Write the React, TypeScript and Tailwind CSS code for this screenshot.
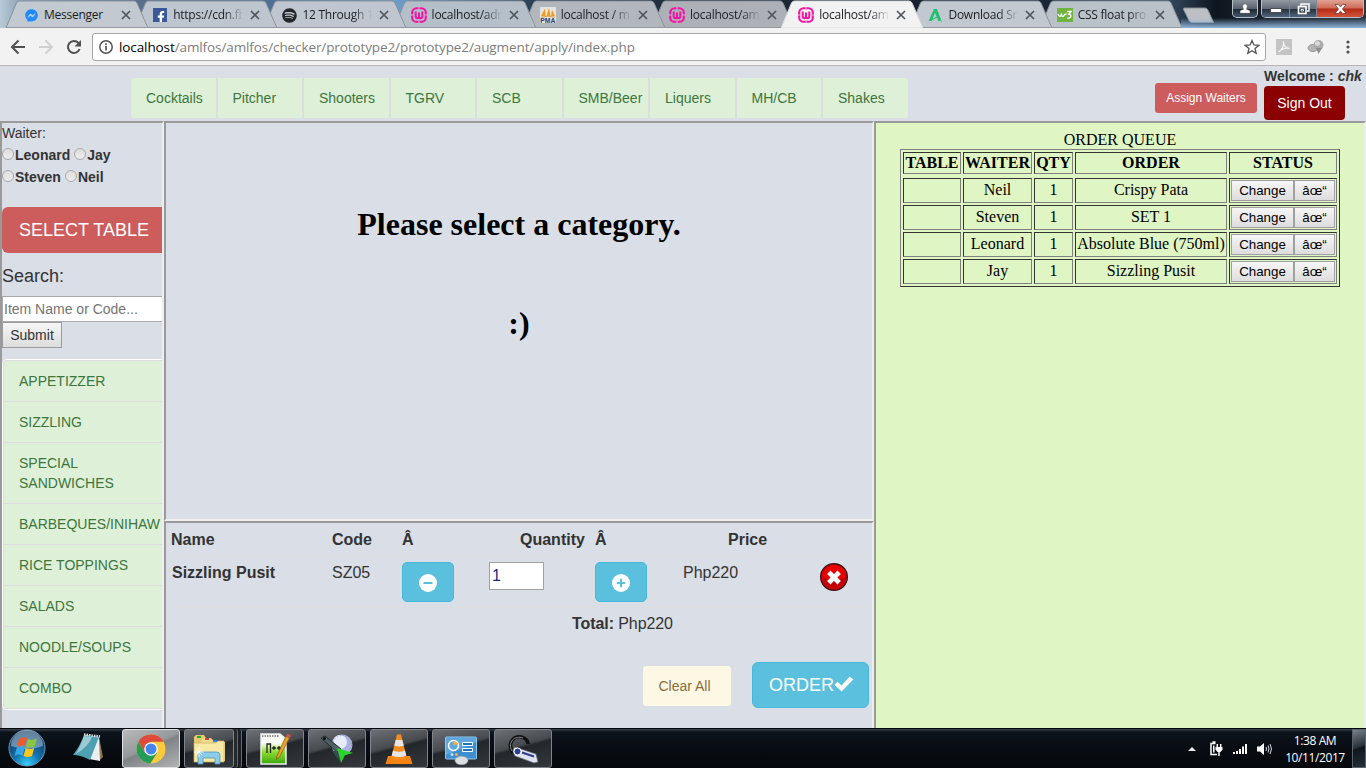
import React from "react";
import { FaFacebookF, FaFacebookMessenger, FaSpotify } from "react-icons/fa";

const UI = "font-['Open_Sans','Noto_Sans',sans-serif]";
const ARIAL = "font-['Liberation_Sans',Arial,sans-serif]";
const TIMES = "font-['Liberation_Serif','Times_New_Roman',serif]";
const INSET = "border-2 border-t-[#9a9a9a] border-l-[#9a9a9a] border-r-[#eeeeee] border-b-[#eeeeee]";

function MessengerIcon() {
  return <FaFacebookMessenger size={13} color="#1e8cff" />;
}
function FacebookIcon() {
  return (
    <div className="flex h-[14px] w-[14px] items-end justify-end overflow-hidden bg-[#3b5998]">
      <FaFacebookF size={12} color="#fff" className="-mb-px" />
    </div>
  );
}
function WampIcon() {
  return (
    <svg width="16" height="16" viewBox="0 0 16 16" fill="none">
      <rect x="1.200" y="1.200" width="13.600" height="13.600" rx="4.400" stroke="#f413a4" strokeWidth="2.100" />
      <path d="M0 8h2.500M13.500 8H16M8 0v2.400M8 13.600V16" stroke="#e6b4d2" strokeWidth="1" />
      <path d="M4.700 4.500v4.500c0 3 3.300 3 3.300 0V5.400M8 9c0 3 3.300 3 3.300 0V4.500" stroke="#f413a4" strokeWidth="2" />
    </svg>
  );
}
function PmaIcon() {
  return (
    <svg width="16" height="16" viewBox="0 0 16 16">
      <rect width="16" height="16" fill="#e4e4e4" />
      <path d="M5 1.500L5.500 9H1zM9 .8L10.500 9H6.500zM12 3l3 6h-4z" fill="#f39a1b" />
      <path d="M1 10.200q7-2 14 0" stroke="#e0a040" fill="none" />
      <text x="0.300" y="15.800" fontSize="6.800" fontWeight="700" fontFamily="Liberation Sans" fill="#33386b">PMA</text>
    </svg>
  );
}
function ApkIcon() {
  return (
    <svg width="15" height="15" viewBox="0 0 15 15">
      <path d="M6 1h3l4.500 12h-3.200L9 9.500 3 13H.6z" fill="#1fbf74" />
      <path d="M7 5l1.500 3.400L4.500 11z" fill="#c6ccd2" />
      <path d="M12.300 11.500l2 2-1.200 1z" fill="#64d8a0" />
    </svg>
  );
}
function W3Icon() {
  return (
    <svg width="16" height="14" viewBox="0 0 16 14">
      <rect width="16" height="14" fill="#6eb43f" />
      <path d="M1 6c1.200 3 2.600 3 3.300.6C5.200 9.400 6.600 9 7.500 6.500L9.500 6M10 3.500h4L11.900 6.200c3.300.2 2.500 4.800-1.700 3.700" stroke="#fff" strokeWidth="1.400" fill="none" />
    </svg>
  );
}

type Tab = { title: string; icon: React.ReactNode; z: string; active?: boolean; fill: string };
const tabs: Tab[] = [
  { title: "Messenger", icon: <MessengerIcon />, z: "z-[9]", fill: "#c3c9d0" },
  { title: "https://cdn.fb", icon: <FacebookIcon />, z: "z-[8]", fill: "#bdc5ce" },
  { title: "12 Through 1", icon: <FaSpotify size={15} color="#23262b" />, z: "z-[7]", fill: "#bfc6cf" },
  { title: "localhost/adr", icon: <WampIcon />, z: "z-[6]", fill: "#b5bfca" },
  { title: "localhost / m", icon: <PmaIcon />, z: "z-[5]", fill: "#b2b7be" },
  { title: "localhost/am", icon: <WampIcon />, z: "z-[4]", fill: "#adb1b7" },
  { title: "localhost/am", icon: <WampIcon />, z: "z-[10]", active: true, fill: "#f2f2f2" },
  { title: "Download Sr", icon: <ApkIcon />, z: "z-[3]", fill: "#c1c8cf" },
  { title: "CSS float pro", icon: <W3Icon />, z: "z-[2]", fill: "#b9c1c9" },
];

function TabStrip() {
  return (
    <div className="relative flex h-[28px] shrink-0 overflow-hidden bg-[linear-gradient(90deg,#b9cbd6_0px,#8aa3bb_20px,#58708c_140px,#4f6f94_270px,#6d9cc8_400px,#2c4258_530px,#22303f_650px,#1c2836_780px,#17222f_920px,#1a2836_1050px,#33475b_1170px,#0e1620_1215px,#2a3644_1366px)] pl-[6px]">
      {tabs.map((t, i) => (
        <div key={i} className={`relative -mr-[12.800px] h-[28px] w-[142px] shrink-0 ${t.z}`}>
          <svg className="absolute inset-0" width="142" height="28" viewBox="0 0 142 28">
            <path d="M0 28L10.500 3Q11.500 1 13.500 1H128Q130 1 131 3L142 28z" fill={t.fill} stroke={t.active ? "#d6d9dc" : "#8b939d"} strokeWidth="1" />
            {!t.active && <path d="M0 27.500H142" stroke="#9299a2" />}
          </svg>
          <div className="relative flex h-full items-center pt-[2px] pl-[17px]">
            <div className="flex w-[16px] justify-center">{t.icon}</div>
            <div className={`ml-[5px] w-[72px] text-[12px] tracking-[-0.250px] whitespace-nowrap text-[#1b1d21] ${i ? "[mask-image:linear-gradient(90deg,#000_70%,transparent_98%)]" : ""} ${UI}`}>{t.title}</div>
            <svg className="ml-[5px]" width="10" height="10" viewBox="0 0 10 10">
              <path d="M1 1l8 8M9 1L1 9" stroke="#50555b" strokeWidth="1.700" />
            </svg>
          </div>
        </div>
      ))}
      <svg className="mt-[7px] ml-[13px] shrink-0" width="34" height="17" viewBox="0 0 34 17">
        <path d="M2 1H23Q25 1 26 3L31.500 15.500H10Q8 15.500 7 13.500L1.500 2.500Q1 1 2 1z" fill="#bcc0c5" stroke="#858b93" />
      </svg>
      <div className="absolute right-0 bottom-0 h-[10px] w-[185px] bg-[linear-gradient(180deg,transparent,#8fb4da)]" />
      <div className="absolute top-0 right-[2px] flex h-[19px] gap-[3px]">
        <div className="flex h-[18px] w-[26px] items-center justify-center rounded-b-[5px] border border-t-0 border-[#b5bfc9] bg-[linear-gradient(180deg,#8a929c_0%,#59626e_50%,#1d2732_52%,#44566a_100%)]">
          <svg width="12" height="11" viewBox="0 0 12 11"><path d="M3.600 3.500a2.400 2.700 0 1 1 4.800 0Q8.400 5.200 7.400 6.200L11 7.500V10.300H1V7.500L4.600 6.200Q3.600 5.200 3.600 3.500z" fill="#fff" stroke="#333" strokeWidth=".5" /></svg>
        </div>
        <div className="flex h-[18px] w-[103px] overflow-hidden rounded-b-[5px] border border-t-0 border-[#b5bfc9]">
          <div className="flex w-[28px] items-center justify-center border-r border-[#7c8894] bg-[linear-gradient(180deg,#929aa4_0%,#636c78_50%,#232e3a_52%,#50657c_100%)] pt-[4px]">
            <div className="h-[5px] w-[12px] border border-[#4a4f57] bg-white" />
          </div>
          <div className="flex w-[27px] items-center justify-center border-r border-[#7c8894] bg-[linear-gradient(180deg,#929aa4_0%,#636c78_50%,#232e3a_52%,#50657c_100%)]">
            <svg width="13" height="12" viewBox="0 0 13 12" fill="none" stroke="#fff"><path d="M4 3V1h8v7h-2" strokeWidth="1.400" /><rect x="1.500" y="3.500" width="7.500" height="7" strokeWidth="1.600" /><path d="M4 6.500h2.500v1.500H4z" strokeWidth=".8" /></svg>
          </div>
          <div className="flex flex-1 items-center justify-center bg-[linear-gradient(180deg,#e0a294_0%,#cf6a56_48%,#b22b15_52%,#d4533b_100%)]">
            <svg width="13" height="10" viewBox="0 0 13 10"><path d="M1 .5h3.500L6.500 3 8.500.5H12L8.500 5l3.500 4.500H8.500L6.500 7l-2 2.500H1L4.500 5z" fill="#fff" stroke="#5c2a2a" strokeWidth=".7" /></svg>
          </div>
        </div>
      </div>
    </div>
  );
}

function Toolbar() {
  return (
    <div className="flex h-[38px] shrink-0 items-center border-b border-[#b6b4b6] bg-[#f2f2f2] pl-[10px]">
      <svg width="16" height="16" viewBox="0 0 16 16" fill="none" stroke="#505050" strokeWidth="2"><path d="M15 8H2M8.500 1.500L2 8l6.500 6.500" /></svg>
      <svg className="ml-[12px]" width="16" height="16" viewBox="0 0 16 16" fill="none" stroke="#d0d0d0" strokeWidth="2"><path d="M1 8h13M7.500 1.500L14 8l-6.500 6.500" /></svg>
      <svg className="ml-[12px]" width="16" height="16" viewBox="0 0 16 16" fill="none" stroke="#505050" strokeWidth="2"><path d="M13.600 10A6 6 0 1 1 12.500 4" /><path d="M15 1v6.500H8.500z" fill="#505050" stroke="none" /></svg>
      <div className="ml-[10px] flex h-[28px] w-[1174px] items-center rounded-[3px] border border-[#a5a5a5] bg-white pl-[6px]">
        <svg width="14" height="14" viewBox="0 0 14 14" fill="none" stroke="#555"><circle cx="7" cy="7" r="6.200" strokeWidth="1.500" /><path d="M7 6v4.500M7 3.200v1.700" strokeWidth="1.700" /></svg>
        <div className={`ml-[6px] flex-1 pt-px text-[13.500px] tracking-[-0.100px] whitespace-nowrap text-[#7d7d7d] ${UI}`}><span className="text-black">localhost</span>/amlfos/amlfos/checker/prototype2/prototype2/augment/apply/index.php</div>
        <svg className="mr-[5px]" width="16" height="16" viewBox="0 0 16 16"><path d="M8 1.500l1.900 4.500 4.800.4-3.700 3.200 1.200 4.800L8 11.800l-4.200 2.600L5 9.600 1.300 6.400 6.100 6z" fill="none" stroke="#555" strokeWidth="1.300" /></svg>
      </div>
      <svg className="ml-[10px]" width="16" height="16" viewBox="0 0 16 16"><rect width="16" height="16" fill="#c4c4c4" /><path d="M2.500 13C5.500 11.500 8.500 7 7.300 2.500c.2 4 3 6.500 6.200 7-4-.8-7.500.3-11 3.500z" fill="none" stroke="#f5f5f5" strokeWidth="1.200" /></svg>
      <svg className="ml-[15px]" width="18" height="16" viewBox="0 0 18 16"><ellipse cx="6" cy="9" rx="5" ry="3.500" fill="#b5b5b5" stroke="#999" /><circle cx="11.500" cy="6" r="5" fill="#aaa" /><circle cx="10.500" cy="4.500" r="2.500" fill="#d8d8d8" /><path d="M9 9h6l-3.500 6z" fill="#8c8c8c" /></svg>
      <svg className="ml-[21px]" width="4" height="14" viewBox="0 0 4 14" fill="#505050"><circle cx="2" cy="2" r="1.600" /><circle cx="2" cy="7" r="1.600" /><circle cx="2" cy="12" r="1.600" /></svg>
    </div>
  );
}

const drinks = ["Cocktails", "Pitcher", "Shooters", "TGRV", "SCB", "SMB/Beer", "Liquers", "MH/CB", "Shakes"];

function Header() {
  return (
    <div className={`flex h-[55px] shrink-0 ${ARIAL}`}>
      <nav className="mt-[12px] ml-[131px] flex h-[40px] w-[777px] overflow-hidden rounded-[3px]">
        {drinks.map((d) => (
          <a key={d} className="flex w-[86.500px] shrink-0 items-center border-r-2 border-[#dddddd] bg-[#dff0d8] pl-[15px] text-[14px] whitespace-nowrap text-[#3c763d] last:w-[85px] last:border-r-0">{d}</a>
        ))}
      </nav>
      <button className="mt-[17px] ml-[247px] h-[30px] w-[102px] rounded-[3px] bg-[#cd5c5c] text-[12px] text-white">Assign Waiters</button>
      <div className="ml-[7px] flex flex-col">
        <div className="h-[20px] text-[14px] leading-[20px] font-bold whitespace-nowrap text-[#333]">Welcome : <i>chk</i></div>
        <button className="h-[34px] w-[81px] rounded-[4px] bg-[#8b0000] text-[14px] text-white">Sign Out</button>
      </div>
    </div>
  );
}

function Radio({ label }: { label: string }) {
  return (
    <label className="flex items-center">
      <span className="-mt-[3px] mr-px h-[12px] w-[12px] rounded-full border border-[#a9a9a9] bg-[linear-gradient(180deg,#dedede,#ececec)]" />
      <b>{label}</b>
    </label>
  );
}

const categories = ["APPETIZZER", "SIZZLING", "SPECIAL SANDWICHES", "BARBEQUES/INIHAW", "RICE TOPPINGS", "SALADS", "NOODLE/SOUPS", "COMBO"];

function Sidebar() {
  return (
    <aside className={`w-[164px] shrink-0 overflow-hidden border-b-0 text-[14px] text-[#333] ${INSET} ${ARIAL}`}>
      <div className="h-[21px] leading-[20px]">Waiter:</div>
      <div className="flex h-[22px] gap-[4px] leading-[22px]"><Radio label="Leonard" /><Radio label="Jay" /></div>
      <div className="flex h-[22px] gap-[4px] leading-[22px]"><Radio label="Steven" /><Radio label="Neil" /></div>
      <button className="mt-[19px] block h-[46px] w-[165px] rounded-[6px] bg-[#cd5c5c] pl-[17px] text-left text-[18px] whitespace-nowrap text-white">SELECT TABLE</button>
      <div className="mt-[10px] h-[26px] text-[18px] leading-[26px]">Search:</div>
      <input placeholder="Item Name or Code..." className="mt-[7px] block h-[26px] w-[180px] border border-[#a9a9a9] bg-white pl-[1px] text-[14px] placeholder:text-[#757575]" />
      <button className="block h-[26px] w-[60px] border border-[#9c9c9c] bg-[linear-gradient(180deg,#f6f6f6,#dddddd)] text-[14px]">Submit</button>
      <ul className="mt-[11px] w-[168px] rounded-[5px] border border-white">
        {categories.map((c) => (
          <li key={c} className="border border-b-0 border-[#dddddd] bg-[#dff0d8] py-[10px] pr-[32px] pl-[15px] leading-[20px] text-[#3c763d] first:rounded-t-[4px] last:rounded-b-[4px] last:border-b">{c}</li>
        ))}
      </ul>
    </aside>
  );
}

function StepIcon({ plus }: { plus?: boolean }) {
  return (
    <svg width="18" height="18" viewBox="0 0 18 18"><circle cx="9" cy="9" r="9" fill="#fff" /><path d={plus ? "M4.800 9h8.400M9 4.800v8.400" : "M4.500 9h9"} stroke="#5bc0de" strokeWidth="2" /></svg>
  );
}

function StepButton({ plus }: { plus?: boolean }) {
  return <button className="flex h-[40px] w-[52px] items-center justify-center rounded-[5px] border border-[#46b8da] bg-[#5bc0de] pt-[2px]"><StepIcon plus={plus} /></button>;
}

const ORDER_COLS = "grid grid-cols-[161px_70px_87px_106px_88px_137px_50px]";

function OrderPanel() {
  return (
    <section className={`flex-1 overflow-hidden border-b-0 pl-[5px] text-[16px] leading-[24px] text-[#333] ${INSET} ${ARIAL}`}>
      <div className={`${ORDER_COLS} h-[33px] pt-[5px] font-bold`}>
        <span>Name</span><span>Code</span><span>Â</span><span className="pl-[31px]">Quantity</span><span>Â</span><span className="pl-[45px]">Price</span>
      </div>
      <div className={`${ORDER_COLS} h-[51px] items-start border-t border-[#dcddde] pt-[5px]`}>
        <b className="-mt-px pl-px">Sizzling Pusit</b>
        <span className="-mt-px">SZ05</span>
        <StepButton />
        <input defaultValue="1" className="h-[28px] w-[55px] border border-[#a0a0a0] bg-white px-[2px] text-[16px] text-[#1f1f80]" />
        <StepButton plus />
        <span className="-mt-px">Php220</span>
        <svg className="mt-px" width="28" height="28" viewBox="0 0 28 28"><circle cx="14" cy="14" r="13.300" fill="#e80000" stroke="#3c1518" strokeWidth="1.400" /><path d="M2 14a12 12 0 0 0 24 0q-12 5-24 0z" fill="#c40008" /><path d="M8.800 9.300l10.400 10.400M19.200 9.300L8.800 19.700" stroke="#fff" strokeWidth="4.800" /></svg>
      </div>
      <div className="h-[55px] border-t border-[#dcddde] pt-[4px] pl-[401px] tracking-[-0.080px]"><b>Total:</b> Php220</div>
      <div className="flex items-start pl-[472px]">
        <button className="mt-[4px] h-[40px] w-[88px] rounded-[3px] bg-[#fcf8e3] pr-[5px] text-[14px] text-[#8a6d3b]">Clear All</button>
        <button className="ml-[21px] flex h-[46px] w-[117px] items-center rounded-[6px] border border-[#46b8da] bg-[#5bc0de] pl-[16px] text-[18px] text-white">ORDER
          <svg className="-mt-[2px]" width="20" height="18" viewBox="0 0 20 18"><path d="M.5 9.800L3.600 6.800 7.500 10.500 15.800 1.500 19.300 4.500 7.600 16.500z" fill="#fff" /></svg>
        </button>
      </div>
    </section>
  );
}

const queue = [
  ["Neil", "Crispy Pata"],
  ["Steven", "SET 1"],
  ["Leonard", "Absolute Blue (750ml)"],
  ["Jay", "Sizzling Pusit"],
];
const CELL = "flex items-center justify-center border border-t-[#333] border-l-[#333] border-r-[#808080] border-b-[#808080] whitespace-nowrap";
const QUEUE_COLS = "grid grid-cols-[58px_69px_39px_152px_108px] gap-[2px]";
const GREY_BTN = "h-[21px] border border-[#a0a0a0] bg-[linear-gradient(180deg,#f6f6f6,#dddddd)] text-[13.333px] leading-[18px]";

function QueuePanel() {
  return (
    <section className={`w-[492px] shrink-0 border-b-0 bg-[#e0f5c4] pt-[7px] pl-[24px] text-[16px] leading-[18px] text-black ${INSET} ${TIMES}`}>
      <div className="h-[19px] w-[440px] pt-px text-center">ORDER QUEUE</div>
      <div className="w-[440px] border border-t-[#808080] border-r-[#333] border-b-[#333] border-l-[#808080] p-[2px]">
        <div className={`${QUEUE_COLS} mb-[4px] h-[22px] font-bold`}>
          {["TABLE", "WAITER", "QTY", "ORDER", "STATUS"].map((h) => <div key={h} className={CELL}>{h}</div>)}
        </div>
        <div className="flex flex-col gap-[2px]">
          {queue.map(([w, o]) => (
            <div key={w} className={`${QUEUE_COLS} h-[25px]`}>
              <div className={CELL} />
              <div className={`${CELL} pb-px`}>{w}</div>
              <div className={`${CELL} pb-px`}>1</div>
              <div className={`${CELL} pb-px`}>{o}</div>
              <div className={`${CELL} ${ARIAL}`}>
                <button className={`${GREY_BTN} w-[63px]`}>Change</button>
                <button className={`${GREY_BTN} w-[41px]`}>âœ“</button>
              </div>
            </div>
          ))}
        </div>
      </div>
    </section>
  );
}

function StartOrb() {
  return (
    <svg width="38" height="38" viewBox="0 0 38 38">
      <defs><radialGradient id="orb" cx=".5" cy=".95" r=".9"><stop offset="0" stopColor="#35d2ff" /><stop offset=".4" stopColor="#1473ae" /><stop offset="1" stopColor="#122f52" /></radialGradient></defs>
      <circle cx="19" cy="19" r="18" fill="url(#orb)" stroke="#6f98b6" />
      <path d="M3 17a16 16 0 0 1 32 0q-16 6-32 0z" fill="#b9d4e6" opacity=".5" />
      <path d="M11 10q4-3 8-1l-2 8q-4-2-8 1z" fill="#f0592b" />
      <path d="M20 10q4 2 9-.5l-2.500 8q-4 2-8.500 0z" fill="#8cc63f" />
      <path d="M8.500 19.500q4-3 8-1l-2 8q-4-2-8 .5z" fill="#35a7e8" />
      <path d="M17.700 19q4 2 8.500 0l-2.200 8q-4 2-8.500 0z" fill="#fdc61b" />
    </svg>
  );
}
function NotepadIcon() {
  return (
    <svg width="32" height="32" viewBox="0 0 32 32">
      <path d="M27 5l4 20-4 4z" fill="#8c7448" /><path d="M13 3l14 2 1 24-11-2z" fill="#e9eef0" />
      <path d="M12 3l15 2-9 23Q9 23 1 23 8 14 12 3z" fill="#4f9fb3" /><path d="M12 4l8 1Q16 15 4 22 9 13 12 4z" fill="#c4e2e8" opacity=".65" />
      <path d="M12 2.500l16 2" stroke="#ddd" strokeWidth="2.500" strokeDasharray="1.500 1" />
    </svg>
  );
}
function ChromeIcon() {
  return (
    <svg width="30" height="30" viewBox="0 0 30 30">
      <circle cx="15" cy="15" r="14.500" fill="#f9cb3c" />
      <path d="M2.400 7.800A14.500 14.500 0 0 1 27.600 7.800H15L8.700 18.600z" fill="#de4a3b" />
      <path d="M2.400 7.800A14.500 14.500 0 0 0 14.300 29.500L21.400 18.600 8.700 18.600z" fill="#249c57" />
      <circle cx="15" cy="15" r="6.800" fill="#fff" /><circle cx="15" cy="15" r="5.500" fill="#4486ee" />
    </svg>
  );
}
function FolderIcon() {
  return (
    <svg width="34" height="32" viewBox="0 0 34 32">
      <path d="M2 4l2-2h8l2 3 15 4v18H2z" fill="#e6c871" /><path d="M9 8l2-3h8l2 3 12 1v19H9z" fill="#f0da90" />
      <path d="M2 10h22l2-2h6v21H2z" fill="#f7e8a6" stroke="#cfae58" strokeWidth=".7" />
      <path d="M5 3h4v2H5z" fill="#20b020" /><path d="M13 5h4v2h-4z" fill="#d8402a" /><path d="M21 7h4v2h-4z" fill="#2c80d8" />
      <path d="M6 31V22q0-3 3-3h15q4 0 4 3v9h-5v-6H11v6z" fill="#8ecbe8" stroke="#4899c4" strokeWidth=".8" />
      <path d="M7 14v10M2 19h10M4 16l6 6M10 16l-6 6" stroke="#fff" strokeWidth=".8" />
    </svg>
  );
}
function NppIcon() {
  return (
    <svg width="32" height="32" viewBox="0 0 32 32">
      <defs><linearGradient id="npp" x1="0" y1="0" x2="0" y2="1"><stop offset=".3" stopColor="#fbfdf7" /><stop offset=".6" stopColor="#8ddb32" /><stop offset="1" stopColor="#37a70c" /></linearGradient></defs>
      <path d="M2 1h19l6 5v25H2z" fill="url(#npp)" stroke="#eee" strokeWidth="1.500" />
      <path d="M3 3h17" stroke="#999" strokeWidth="2" strokeDasharray="1.500 1" />
      <path d="M8 20v-9h3.500v9M13 15h4M15 13v4M18 15h4M20 13v4" fill="none" stroke="#222" strokeWidth="1.300" />
      <path d="M18 23L27 3l3.500 2L20.500 24l-3 2.500z" fill="#e8a52c" stroke="#805010" strokeWidth=".7" /><path d="M27 3l1.500-2.500 3.500 2-1.500 2.500z" fill="#d8504a" />
    </svg>
  );
}
function GolfIcon() {
  return (
    <svg width="34" height="32" viewBox="0 0 34 32">
      <circle cx="22" cy="12" r="10.500" fill="#aab3dc" /><circle cx="20" cy="9" r="7" fill="#e7ebf9" /><circle cx="22" cy="12" r="9.500" fill="none" stroke="#8992bd" strokeDasharray="1 2" />
      <path d="M1 5l4-2 16 13-3 4z" fill="#4d6265" stroke="#1f2e30" /><circle cx="4.500" cy="5.500" r="1.500" fill="#111" />
      <path d="M17 15l16 5-8 2-4 8-2-6z" fill="#2bd42b" /><path d="M12 18l9 12-3-12z" fill="#334c4c" />
    </svg>
  );
}
function VlcIcon() {
  return (
    <svg width="28" height="32" viewBox="0 0 28 32">
      <path d="M3 23h22l2.500 8H.5z" fill="#f58312" /><path d="M12 1.500h4l6 24q-8 4-16 0z" fill="#f68b1e" />
      <path d="M10.700 7h6.600l1.500 5.500q-4.500 2-9.500 0zM8 17.500q6 2.500 12 0l1.200 5q-7 3-14.500 0z" fill="#e4e6e8" />
    </svg>
  );
}
function ControlPanelIcon() {
  return (
    <svg width="34" height="32" viewBox="0 0 34 32">
      <rect x="1.500" y="4" width="31" height="22" rx="1" fill="#3e8fcf" stroke="#90c6ee" /><path d="M2 4.500h30v5L2 22z" fill="#77b9e8" opacity=".6" />
      <circle cx="9.500" cy="12.500" r="5" fill="none" stroke="#fff" strokeWidth="1.500" /><path d="M9.500 12.500V7.500l5 3z" fill="#ffb02e" />
      <path d="M18.500 9.500h10v3h-10zM18.500 15.500h10v3h-10z" fill="#1b73b8" stroke="#fff" /><circle cx="8" cy="21.500" r="1.500" fill="#bfe2ff" /><circle cx="12.500" cy="21.500" r="1.500" fill="#ffb02e" />
      <ellipse cx="17.500" cy="27.500" rx="6.500" ry="4.200" fill="#dcdfe2" stroke="#9da3a8" strokeWidth=".6" />
    </svg>
  );
}
function HeadsetIcon() {
  return (
    <svg width="32" height="32" viewBox="0 0 32 32" fill="none">
      <path d="M6 20C-1 9 8 1 17 5q4 2 4 6" stroke="#111" strokeWidth="3.500" /><path d="M5 18C0 9 8 2 16 5" stroke="#8b8f93" strokeWidth="1" />
      <path d="M8 14l21 7 2 8-4 1-19-7q-4-6 0-9z" fill="#dfe3ee" stroke="#596079" strokeWidth=".7" /><circle cx="10.500" cy="18.500" r="3.500" fill="#2a3e94" stroke="#fff" /><path d="M15 19.500l12 4" stroke="#2b3f90" strokeWidth="2.200" />
    </svg>
  );
}

const TASK = "flex h-[39px] items-center justify-center rounded-[3px] border border-[#7f858a] bg-[linear-gradient(165deg,#6d7175_0%,#474b50_42%,#23272c_48%,#33383d_100%)]";

function Taskbar() {
  return (
    <footer className="flex h-[40px] shrink-0 items-start border-t border-[#05080c] bg-[linear-gradient(180deg,#3a444e_0px,#0c131a_3px,#080d13_20px,#05080c_100%)]">
      <div className="ml-[8px]"><StartOrb /></div>
      <div className="mt-[3px] ml-[26px]"><NotepadIcon /></div>
      <div className="ml-[18px] flex h-[39px] w-[58px] items-center justify-center rounded-[3px] border border-[#dfe0e1] bg-[linear-gradient(155deg,#b8babc_0%,#96999b_45%,#818486_50%,#b0b3b4_100%)]"><ChromeIcon /></div>
      <div className="ml-[4px] flex h-[39px]">
        <div className={`${TASK} w-[50px]`}><FolderIcon /></div>
        <div className="w-[4px] rounded-r-[3px] border-r border-[#63696e] bg-[#24292e]" />
        <div className="w-[4px] rounded-r-[3px] border-r border-[#63696e] bg-[#1b2025]" />
      </div>
      <div className="ml-[4px] flex gap-[4px]">
        <div className={`${TASK} w-[58px]`}><NppIcon /></div>
        <div className={`${TASK} w-[58px]`}><GolfIcon /></div>
        <div className={`${TASK} w-[58px]`}><VlcIcon /></div>
        <div className={`${TASK} w-[58px]`}><ControlPanelIcon /></div>
        <div className={`${TASK} w-[58px]`}><HeadsetIcon /></div>
      </div>
      <div className="ml-auto flex h-[39px] items-center">
        <svg width="8" height="4" viewBox="0 0 8 4"><path d="M4 0l4 4H0z" fill="#e8e8ee" /></svg>
        <svg className="ml-[13px]" width="14" height="16" viewBox="0 0 14 16" fill="none"><path d="M6.500 2.500H2v11h6M3.500 1h3" stroke="#fff" strokeWidth="1.500" /><path d="M4 4.500h1.500v7H4z" fill="#fff" /><path d="M6.500 6h7v2.500l-2 2.500h-3l-2-2.500z" fill="#fff" /><path d="M8.300 3v3M11.700 3v3M10 11v4" stroke="#fff" strokeWidth="1.500" /></svg>
        <svg className="ml-[10px]" width="15" height="12" viewBox="0 0 15 12" fill="#fff"><path d="M0 9h2v2H0zM3 8h2v3H3zM6 6h2v5H6zM9 3.500h2V11H9zM12 1h2v10h-2z" /></svg>
        <svg className="ml-[9px]" width="16" height="14" viewBox="0 0 16 14" fill="none"><path d="M0 4.500h3L7 1v12L3 9.500H0z" fill="#fff" /><path d="M9 5q1 2 0 4M11 3.500q2 3.500 0 7M13 2q3 5 0 10" stroke="#d9dde0" /></svg>
        <div className={`ml-[12px] w-[60px] text-center text-[12px] leading-[17px] tracking-[-0.400px] text-white ${UI}`}>1:38 AM<br />10/11/2017</div>
        <div className="ml-[7px] h-[39px] w-[14px] border border-[#59646d] bg-[linear-gradient(160deg,#77818a_0%,#2b343c_45%,#10161c_50%,#25303a_100%)]" />
      </div>
    </footer>
  );
}

export default function App() {
  return (
    <div className="flex h-[768px] w-[1366px] flex-col overflow-hidden bg-[#dadee6]">
      <TabStrip />
      <Toolbar />
      <Header />
      <main className="flex min-h-0 flex-1">
        <Sidebar />
        <div className="flex w-[710px] shrink-0 flex-col">
          <section className={`h-[400px] shrink-0 text-center text-[32px] leading-[37px] font-bold text-black ${INSET} ${TIMES}`}>
            <h1 className="mt-[83px]">Please select a category.</h1>
            <h1 className="mt-[62px]">:)</h1>
          </section>
          <OrderPanel />
        </div>
        <QueuePanel />
      </main>
      <Taskbar />
    </div>
  );
}
